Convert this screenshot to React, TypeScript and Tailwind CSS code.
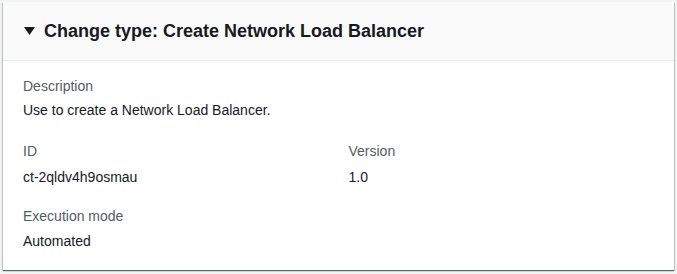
export default function App() {
  const labelCls = 'text-[14px] leading-[22px] text-[#545b64]'
  const valueCls = 'text-[14px] leading-[22px] text-[#16191f] mt-[2px]'

  return (
    <div
      className="min-h-[274px] w-[677px] bg-[#f2f3f3] pt-[2px] px-[3px]"
      style={{ fontFamily: '"Liberation Sans", Arial, sans-serif' }}
    >
      <div className="bg-white shadow-[0_1px_1px_0_rgba(0,28,36,0.5),1px_1px_1px_0_rgba(0,28,36,0.15),-1px_1px_1px_0_rgba(0,28,36,0.15)]">
        <div className="flex items-center h-[59px] bg-[#fafafa] border-b border-[#eaeded] px-[21px]">
          <svg width="11" height="8" viewBox="0 0 11 8" className="mr-[9px]">
            <path d="M0 0 L11 0 L5.5 8 Z" fill="#16191f" />
          </svg>
          <h2 className="text-[18px] font-bold leading-[22px] text-[#16191f]">
            Change type: Create Network Load Balancer
          </h2>
        </div>
        <div className="px-[20px] pt-[14px] pb-[18px]">
          <div>
            <div className={labelCls}>Description</div>
            <div className={valueCls}>Use to create a Network Load Balancer.</div>
          </div>
          <div className="grid grid-cols-2 gap-x-[20px] mt-[19px]">
            <div>
              <div className={labelCls}>ID</div>
              <div className={valueCls + ' mt-[4px]'}>ct-2qldv4h9osmau</div>
            </div>
            <div>
              <div className={labelCls}>Version</div>
              <div className={valueCls + ' mt-[4px]'}>1.0</div>
            </div>
          </div>
          <div className="mt-[17px]">
            <div className={labelCls}>Execution mode</div>
            <div className={valueCls + ' mt-[3px]'}>Automated</div>
          </div>
        </div>
      </div>
    </div>
  )
}
